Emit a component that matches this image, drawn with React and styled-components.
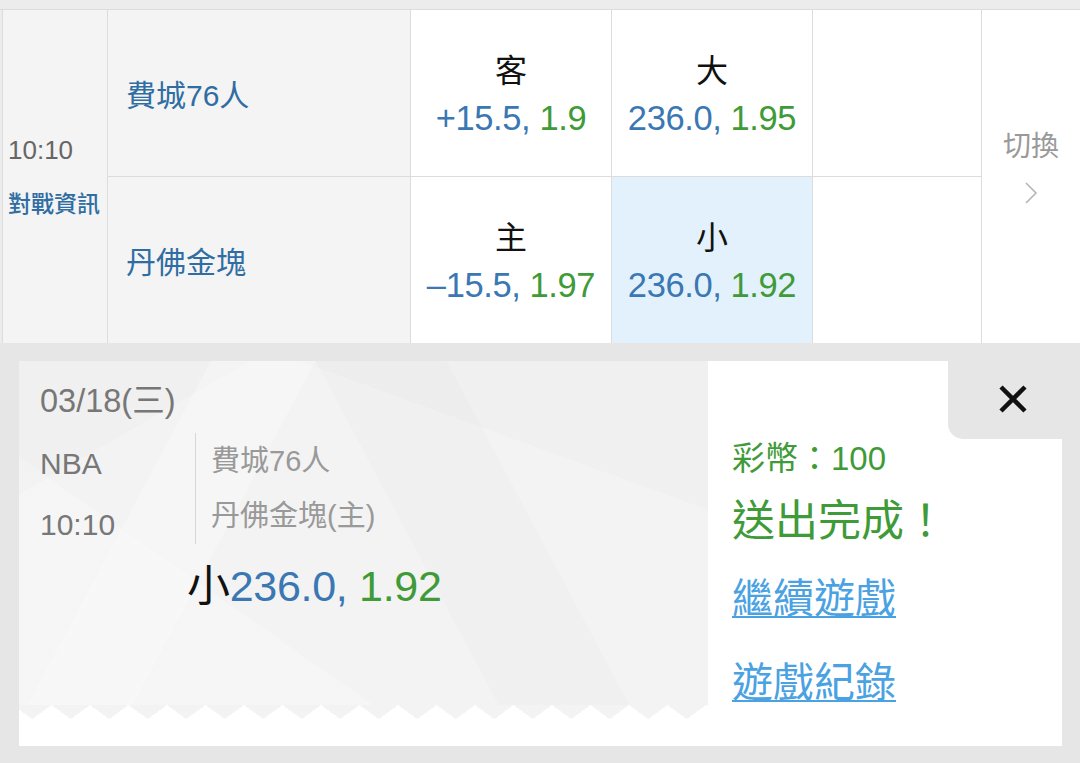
import React from "react";
import styled, { createGlobalStyle } from "styled-components";

const Global = createGlobalStyle`
  html, body { margin: 0; padding: 0; background: #e6e6e6; }
  body { font-family: "Liberation Sans", "Noto Sans CJK TC", sans-serif; }
  * { box-sizing: border-box; }
`;

const Page = styled.div`
  width: 1080px;
  height: 763px;
  overflow: hidden;
  background: #e6e6e6;
`;

const TopBand = styled.div`
  height: 9px;
  background: #ececec;
`;

const Table = styled.div`
  display: grid;
  grid-template-columns: 106px 303px 201px 201px 169px 98px;
  grid-template-rows: 167px 166px;
  padding-left: 2px;
  background: #ececec;
  border-top: 1px solid #dcdcdc;
`;

const Cell = styled.div`
  background: ${(p) => p.$bg || "#fff"};
  border-right: 1px solid #dcdcdc;
  border-bottom: ${(p) => (p.$top ? "1px solid #dcdcdc" : "none")};
`;

const TimeCell = styled(Cell)`
  grid-row: 1 / span 2;
  grid-column: 1;
  border-left: 1px solid #dcdcdc;
  display: flex;
  flex-direction: column;
  justify-content: center;
  padding-left: 5px;
  padding-bottom: 2px;
`;

const TimeText = styled.div`
  font-size: 26px;
  line-height: 52px;
  color: #666;
`;

const InfoLink = styled.div`
  font-family: "Noto Sans CJK TC", sans-serif;
  font-size: 23px;
  font-weight: 500;
  line-height: 52px;
  color: #2f6da3;
`;

const TeamCell = styled(Cell)`
  display: flex;
  align-items: center;
  padding-left: 18px;
  font-family: "Liberation Sans", "Noto Sans CJK TC", sans-serif;
  font-size: 30px;
  color: #2f6da3;
`;

const OddsCell = styled(Cell)`
  display: flex;
  flex-direction: column;
  align-items: center;
  justify-content: center;
`;

const OddsLabel = styled.div`
  font-family: "Noto Sans CJK TC", sans-serif;
  font-size: 32px;
  line-height: 50px;
  color: #111;
`;

const OddsLine = styled.div`
  font-size: 34.5px;
  line-height: 50px;
  white-space: nowrap;
  letter-spacing: -0.4px;
`;

const Blue = styled.span`
  color: #3a77b3;
`;
const Green = styled.span`
  color: #3f9a38;
`;

const SwitchCell = styled(Cell)`
  grid-row: 1 / span 2;
  grid-column: 6;
  border-right: none;
  display: flex;
  flex-direction: column;
  align-items: center;
  padding-top: 114px;
`;

const SwitchText = styled.div`
  font-family: "Noto Sans CJK TC", sans-serif;
  font-size: 28px;
  line-height: 40px;
  color: #9a9a9a;
`;

const Chevron = styled.svg`
  margin-top: 18px;
  width: 14px;
  height: 22px;
`;

const Bottom = styled.div`
  padding: 18px 18px 0 19px;
`;

const Card = styled.div`
  display: flex;
  height: 385px;
  background: #fff;
`;

const Ticket = styled.div`
  width: 689px;
  display: flex;
  flex-direction: column;
  background: #fff;
`;

const TicketBody = styled.div`
  flex: 1;
  padding: 20px 21px 0 21px;
  background:
    linear-gradient(118deg, rgba(255,255,255,0) 0 22%, rgba(255,255,255,0.25) 22% 34%, rgba(255,255,255,0) 34%),
    linear-gradient(62deg, rgba(255,255,255,0) 0 55%, rgba(0,0,0,0.01) 55% 70%, rgba(255,255,255,0) 70%),
    linear-gradient(150deg, rgba(0,0,0,0.012) 0 18%, rgba(255,255,255,0) 18%),
    linear-gradient(35deg, rgba(255,255,255,0.22) 0 30%, rgba(255,255,255,0) 30%),
    linear-gradient(200deg, rgba(0,0,0,0.01) 0 25%, rgba(255,255,255,0) 25%),
    #f3f3f3;
`;

const Zigzag = styled.div`
  height: 14px;
  background-image: conic-gradient(from -54deg at 50% 100%, #f3f3f3 108deg, transparent 108deg);
  background-size: 38.5px 14px;
  background-repeat: repeat-x;
  background-position: -6px 0;
`;

const TicketFoot = styled.div`
  height: 27px;
`;

const DateText = styled.div`
  font-size: 32.5px;
  line-height: 40px;
  color: #777;
`;

const InfoRow = styled.div`
  display: flex;
  align-items: flex-start;
  margin-top: 12px;
`;

const MetaCol = styled.div`
  width: 155px;
  font-size: 30px;
  line-height: 61px;
  color: #777;
`;

const TeamsCol = styled.div`
  border-left: 1px solid #d6d6d6;
  padding-left: 15px;
  padding-top: 1px;
  font-size: 29px;
  line-height: 55px;
  color: #999;
`;

const Pick = styled.div`
  margin-left: 147px;
  margin-top: 2px;
  font-size: 43px;
  line-height: 50px;
  white-space: nowrap;
  letter-spacing: -0.3px;
`;

const PickLabel = styled.span`
  font-family: "Noto Sans CJK TC", sans-serif;
  color: #111;
`;

const Panel = styled.div`
  flex: 1;
  display: flex;
  flex-direction: column;
  background: #fff;
`;

const CloseRow = styled.div`
  display: flex;
  justify-content: flex-end;
`;

const CloseTab = styled.div`
  width: 114px;
  height: 78px;
  background: #e6e6e6;
  border-bottom-left-radius: 15px;
  display: flex;
  align-items: center;
  justify-content: center;
  padding-left: 16px;
  padding-bottom: 2px;
`;

const PanelBody = styled.div`
  padding-left: 24px;
  font-family: "Liberation Sans", "Noto Sans CJK TC", sans-serif;
`;

const Coins = styled.div`
  font-size: 33px;
  line-height: 40px;
  color: #3f9a38;
`;

const Done = styled.div`
  margin-top: 10px;
  font-family: "Noto Sans CJK TC", sans-serif;
  font-size: 43px;
  line-height: 56px;
  color: #3f9a38;
`;

const Link = styled.a`
  display: block;
  margin-top: ${(p) => p.$mt}px;
  font-family: "Noto Sans CJK TC", sans-serif;
  font-size: 41px;
  line-height: 48px;
  color: #4aa2e2;
  text-decoration: underline;
  text-decoration-thickness: 2px;
  text-underline-offset: 3px;
`;

function Odds({ line, odd }) {
  return (
    <OddsLine>
      <Blue>{line}, </Blue>
      <Green>{odd}</Green>
    </OddsLine>
  );
}

export default function App() {
  return (
    <Page>
      <Global />
      <TopBand />
      <Table>
        <TimeCell $bg="#f4f4f4">
          <TimeText>10:10</TimeText>
          <InfoLink>對戰資訊</InfoLink>
        </TimeCell>
        <TeamCell $bg="#f4f4f4" $top>費城76人</TeamCell>
        <OddsCell $top>
          <OddsLabel>客</OddsLabel>
          <Odds line="+15.5" odd="1.9" />
        </OddsCell>
        <OddsCell $top>
          <OddsLabel>大</OddsLabel>
          <Odds line="236.0" odd="1.95" />
        </OddsCell>
        <Cell $top />
        <SwitchCell>
          <SwitchText>切換</SwitchText>
          <Chevron viewBox="0 0 14 22">
            <polyline points="2,1 12,11 2,21" fill="none" stroke="#b5b5b5" strokeWidth="1.6" />
          </Chevron>
        </SwitchCell>
        <TeamCell $bg="#f4f4f4">丹佛金塊</TeamCell>
        <OddsCell>
          <OddsLabel>主</OddsLabel>
          <Odds line="–15.5" odd="1.97" />
        </OddsCell>
        <OddsCell $bg="#e2f1fb">
          <OddsLabel>小</OddsLabel>
          <Odds line="236.0" odd="1.92" />
        </OddsCell>
        <Cell />
      </Table>
      <Bottom>
        <Card>
          <Ticket>
            <TicketBody>
              <DateText>03/18(三)</DateText>
              <InfoRow>
                <MetaCol>
                  <div>NBA</div>
                  <div>10:10</div>
                </MetaCol>
                <TeamsCol>
                  <div>費城76人</div>
                  <div>丹佛金塊(主)</div>
                </TeamsCol>
              </InfoRow>
              <Pick>
                <PickLabel>小</PickLabel>
                <Blue>236.0, </Blue>
                <Green>1.92</Green>
              </Pick>
            </TicketBody>
            <Zigzag />
            <TicketFoot />
          </Ticket>
          <Panel>
            <CloseRow>
              <CloseTab>
                <svg width="30" height="30" viewBox="0 0 30 30">
                  <path d="M3 3 L27 27 M27 3 L3 27" stroke="#111" strokeWidth="4.5" strokeLinecap="butt" />
                </svg>
              </CloseTab>
            </CloseRow>
            <PanelBody>
              <Coins>彩幣：100</Coins>
              <Done>送出完成！</Done>
              <Link $mt={26}>繼續遊戲</Link>
              <Link $mt={36}>遊戲紀錄</Link>
            </PanelBody>
          </Panel>
        </Card>
      </Bottom>
    </Page>
  );
}
